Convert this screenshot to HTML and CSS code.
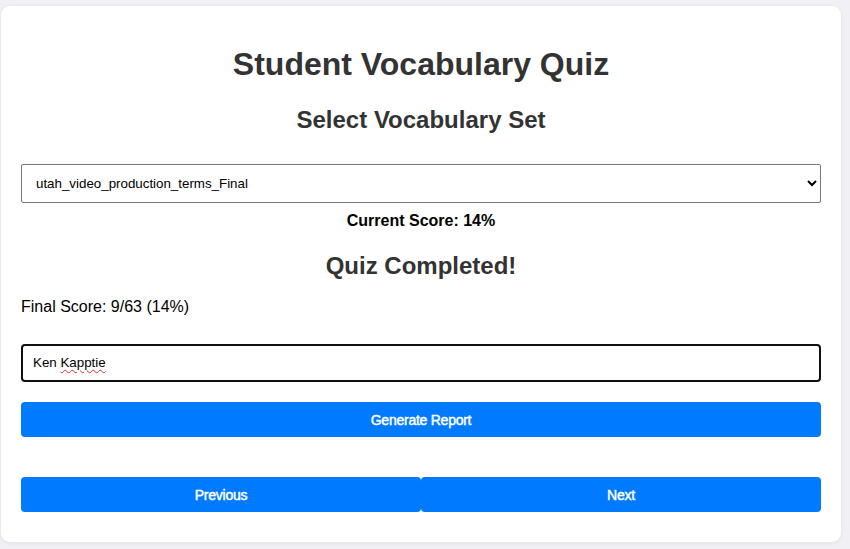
FILE: index.html
```html
<!DOCTYPE html>
<html lang="en">
<head>
<meta charset="utf-8">
<title>Student Vocabulary Quiz</title>
<link rel="stylesheet" href="styles.css">
</head>
<body>
<div class="card">
  <h1 class="title">Student Vocabulary Quiz</h1>
  <h2 class="subtitle">Select Vocabulary Set</h2>
  <select class="set-select">
    <option>utah_video_production_terms_Final</option>
  </select>
  <div class="current-score">Current Score: 14%</div>
  <h2 class="done">Quiz Completed!</h2>
  <p class="final">Final Score: 9/63 (14%)</p>
  <div class="name-field">Ken <span class="misspelled">Kapptie</span></div>
  <button class="btn btn-report">Generate Report</button>
  <div class="nav">
    <button class="btn">Previous</button>
    <button class="btn">Next</button>
  </div>
</div>
</body>
</html>
```
FILE: styles.css
```css
html, body {
  margin: 0;
  padding: 0;
}
body {
  background: #f0f0f5;
  font-family: "Liberation Sans", Arial, sans-serif;
  padding: 6px 9px 7px 1px;
}
.card {
  background: #ffffff;
  border-radius: 9px;
  box-shadow: 0 1px 4px rgba(0, 0, 0, 0.08);
  padding: 20px 20px 30px 20px;
  display: flex;
  flex-direction: column;
}
.title {
  font-size: 32px;
  line-height: 37px;
  font-weight: bold;
  color: #333333;
  text-align: center;
  margin: 20px 0 23px;
}
.subtitle, .done {
  font-size: 24px;
  line-height: 28px;
  font-weight: bold;
  color: #333333;
  text-align: center;
  margin: 0;
}
.subtitle {
  margin-bottom: 30px;
}
.set-select {
  height: 39px;
  font-family: "Liberation Sans", Arial, sans-serif;
  font-size: 13.33px;
  color: #000;
  border: 1px solid #767676;
  border-radius: 2px;
  background: #fff;
  padding: 0 6px 0 10px;
  margin: 0 0 9px;
}
.current-score {
  font-size: 16px;
  line-height: 18px;
  font-weight: bold;
  color: #000;
  text-align: center;
  margin-bottom: 22px;
}
.done {
  margin-bottom: 18px;
}
.final {
  font-size: 16px;
  line-height: 18px;
  color: #000;
  margin: 0 0 28px;
}
.name-field {
  height: 38px;
  box-sizing: border-box;
  border: 2px solid #101010;
  border-radius: 4px;
  padding: 0 10px;
  font-size: 13.33px;
  line-height: 34px;
  color: #000;
  margin-bottom: 20px;
}
.misspelled {
  text-decoration: underline wavy #e0302a;
  text-decoration-thickness: 1px;
  text-underline-offset: 2px;
}
.btn {
  height: 35px;
  border: none;
  border-radius: 4px;
  background: #007bff;
  color: #ffffff;
  font-family: "Liberation Sans", Arial, sans-serif;
  font-size: 14px;
  font-weight: normal;
  letter-spacing: -0.25px;
  -webkit-text-stroke: 0.45px #ffffff;
  padding: 0;
}
.btn-report {
  margin-bottom: 40px;
}
.nav {
  display: flex;
}
.nav .btn {
  flex: 1;
}
```
